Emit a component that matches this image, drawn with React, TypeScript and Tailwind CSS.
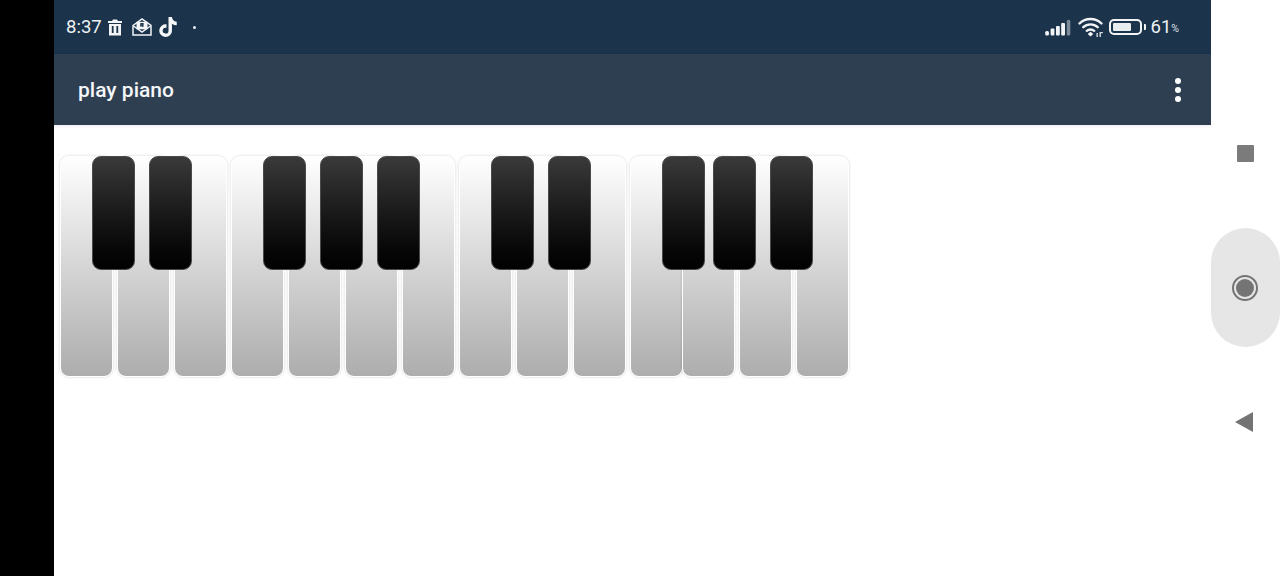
const WHITE_KEYS = [
  { black: 32, ml: 0 },
  { black: 32, ml: 4 },
  { ml: 4 },
  { black: 32, ml: 4 },
  { black: 32, ml: 4 },
  { black: 32, ml: 4 },
  { ml: 4 },
  { black: 32, ml: 4 },
  { black: 32, ml: 4 },
  { ml: 4 },
  { black: 32, ml: 4 },
  { black: 31, ml: -1 },
  { black: 31, ml: 4 },
  { ml: 4 },
];

function Piano() {
  return (
    <div className="flex pl-[6px] pt-[30.5px]">
      {WHITE_KEYS.map((k, i) => (
        <div
          key={i}
          className="relative h-[221.5px] w-[53px] shrink-0 rounded-[9px] border-[1.5px] border-white bg-gradient-to-b from-white to-[#adadad] shadow-[0_0_3px_rgba(0,0,0,0.18)]"
          style={{ marginLeft: k.ml }}
        >
          {k.black !== undefined && (
            <div
              className="absolute top-[-0.5px] z-10 h-[114px] w-[43px] rounded-[9px] border border-[#4a4a4a] bg-gradient-to-b from-[#3a3a3a] to-[#020202]"
              style={{ left: k.black - 1 }}
            />
          )}
        </div>
      ))}
    </div>
  );
}

function StatusLeft() {
  return (
    <div className="flex items-center">
      <span className="text-[18.5px] leading-none text-[#eef2f5]">8:37</span>
      <svg width="14" height="17" viewBox="0 0 14 16" className="ml-[6px]">
        <path fill="#f2f4f6" d="M5 0h4l1 1.500h4V3.600H0V1.500h4zM1 4.600h12V16H1zM3.800 6.600v7h1.800v-7zm4.600 0v7h1.800v-7z" />
      </svg>
      <svg width="20" height="18" viewBox="0 0 20 18" className="ml-[10px]">
        <path fill="none" stroke="#f2f4f6" strokeWidth="1.500" d="M1 7.500 10 1l9 6.500V17H1z" />
        <rect x="4.500" y="3.800" width="11" height="7.500" fill="#f2f4f6" />
        <path fill="none" stroke="#f2f4f6" strokeWidth="1.500" d="m1.500 8 8.500 6 8.500-6" />
        <path fill="none" stroke="#1b334b" strokeWidth="1.200" d="M8.800 5.200v3.600M8.800 5.600h2.200v1.600H8.800m1.200 0 1.200 1.600" />
      </svg>
      <svg width="18" height="20" viewBox="0 0 448 512" className="ml-[7px]">
        <path fill="#f7f8f9" d="M448 209.900a210.100 210.100 0 0 1-122.800-39.300v178.800A162.600 162.600 0 1 1 185 188.300v89.900a74.600 74.600 0 1 0 52.200 71.200V0h88a121.200 121.200 0 0 0 1.900 22.200 122.200 122.200 0 0 0 53.900 80.200 121.400 121.400 0 0 0 67 20.100z" />
      </svg>
      <span className="ml-[16px] h-[3px] w-[3px] rounded-full bg-[#e8ecef]" />
    </div>
  );
}

function StatusRight() {
  return (
    <div className="flex items-center">
      <svg width="26" height="17" viewBox="0 0 26 16">
        <rect x="0.200" y="11.500" width="3.800" height="4.500" rx="1.500" fill="#f2f4f6" />
        <rect x="5.600" y="9" width="3.800" height="7" rx="1" fill="#f2f4f6" />
        <rect x="11" y="6.500" width="3.800" height="9.500" rx="1" fill="#f2f4f6" />
        <rect x="16.200" y="3.500" width="3.800" height="12.500" rx="1" fill="#f2f4f6" />
        <rect x="21.800" y="0.500" width="3.500" height="15.500" rx="1" fill="#7d8b99" />
      </svg>
      <svg width="25" height="20" viewBox="0 0 25 20" className="ml-[7px]">
        <path fill="none" stroke="#f2f4f6" strokeWidth="2.400" strokeLinecap="round" d="M1.500 6.500C7.500.5 17.500.5 23.500 6.500M5.300 10.200c4-3.800 10.400-3.800 14.400 0M8.800 13.800c2-1.700 5.400-1.700 7.400 0" />
        <path fill="#f2f4f6" d="m12.500 14.800 2.800 2.300-2.800 2.300-2.800-2.300z" />
        <path fill="#d5dbe0" d="M18.500 16h1.400v4h-1.400zM21.500 15h1.400v5h-1.400zM22.900 15h2v1.200h-2z" />
      </svg>
      <div className="ml-[6px] flex items-center">
        <div className="flex h-[16px] w-[33px] items-center rounded-[5px] border-2 border-[#f2f4f6] p-[2px]">
          <div className="h-full w-[18px] rounded-[1px] bg-[#e9edf0]" />
        </div>
        <span className="ml-[2px] h-[6px] w-[2px] rounded-r-[1px] bg-[#f2f4f6]" />
      </div>
      <span className="ml-[5px] text-[18.5px] leading-none text-[#eef2f5]">61</span>
      <span className="mt-[4px] text-[10.500px] leading-none text-[#dfe4e8]">%</span>
    </div>
  );
}

function SideNav() {
  return (
    <div className="flex w-[69px] shrink-0 flex-col items-center bg-white pt-[145px]">
      <div className="h-[17px] w-[17px] rounded-[1px] bg-[#7b7b7b]" />
      <div className="mt-[66px] flex h-[119px] w-[69px] items-center justify-center rounded-[35px] bg-[#e6e6e6] pr-[1px]">
        <div className="flex h-[26px] w-[26px] items-center justify-center rounded-full border-2 border-[#747474]">
          <div className="h-[18px] w-[18px] rounded-full bg-[#747474]" />
        </div>
      </div>
      <svg width="18" height="20" viewBox="0 0 18 20" className="mt-[65px] mr-[4px]">
        <path fill="#747474" d="M18 0v20L0 10z" />
      </svg>
    </div>
  );
}

export default function App() {
  return (
    <div className="flex h-[576px] w-[1280px] overflow-hidden bg-white font-['Roboto',sans-serif]">
      <div className="w-[54px] shrink-0 bg-black" />
      <div className="flex w-[1157px] shrink-0 flex-col">
        <div className="flex h-[54px] items-center justify-between bg-[#1b334b] pr-[32px] pl-[12px]">
          <StatusLeft />
          <StatusRight />
        </div>
        <div className="flex h-[71px] items-center justify-between bg-[#2f3f52] pr-[30px] pl-[24px] shadow-[0_1px_4px_rgba(0,0,0,0.08)]">
          <span className="mt-[2px] text-[21px] font-medium text-[#f4f6f8]">play piano</span>
          <div className="flex flex-col gap-[3px]">
            <span className="h-[6px] w-[6px] rounded-full bg-white" />
            <span className="h-[6px] w-[6px] rounded-full bg-white" />
            <span className="h-[6px] w-[6px] rounded-full bg-white" />
          </div>
        </div>
        <Piano />
      </div>
      <SideNav />
    </div>
  );
}
